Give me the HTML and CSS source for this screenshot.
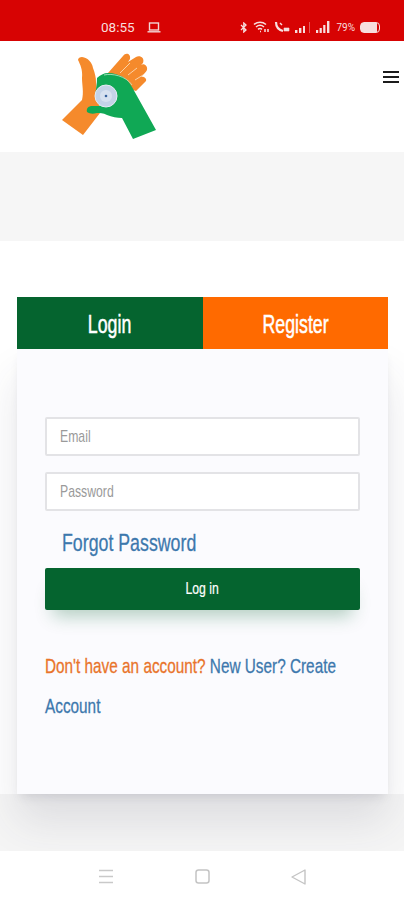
FILE: index.html
```html
<!DOCTYPE html>
<html lang="en">
<head>
    <meta charset="UTF-8">
    <meta name="viewport" content="width=device-width, initial-scale=1.0">
    <title>Login</title>
    <link rel="stylesheet" href="styles.css">
</head>
<body>
    <div class="statusbar">
        <span class="time">08:55</span>
        <svg class="laptop" width="14" height="11" viewBox="0 0 14 11" fill="none" stroke="#f3d6d6" stroke-width="1.4">
            <rect x="2.5" y="1" width="9" height="7"/>
            <path d="M0.5 9.8h13"/>
        </svg>
        <div class="status-right">
            <svg width="8" height="11" viewBox="0 0 8 11" fill="none" stroke="#f7dede" stroke-width="1.3"><path d="M1 3l5 5-2.2 2V1L6 3 1 8"/></svg>
            <svg width="16" height="12" viewBox="0 0 16 12" fill="none" stroke="#f7dede" stroke-width="1.5"><path d="M1 3.5c3.5-3 8.5-3 12 0M3 6c2.4-2 5.6-2 8 0M5 8.4c1.2-1 2.8-1 4 0"/><path d="M7 10.5h1M12 8v3M15 8v3"/></svg>
            <svg width="16" height="12" viewBox="0 0 16 12" fill="none" stroke="#f7dede" stroke-width="2.2"><path d="M2 1c0 5 3 8 7 9"/><path d="M10 7h5v3h-5z" fill="#f7dede" stroke-width="0.6"/><path d="M6 2l2 2" stroke-width="1.4"/></svg>
            <svg width="16" height="11" viewBox="0 0 16 11" fill="#f7dede"><rect x="0" y="8" width="2.4" height="3"/><rect x="4" y="6" width="2.4" height="5"/><rect x="8" y="4" width="2" height="7"/><rect x="14" y="0" width="0.8" height="11" opacity=".5"/></svg>
            <svg width="15" height="12" viewBox="0 0 15 12" fill="#f7dede"><rect x="0" y="9" width="2.2" height="3"/><rect x="3.6" y="7" width="2.2" height="5"/><rect x="7.2" y="4" width="2.2" height="8"/><rect x="11" y="0" width="2.4" height="12"/></svg>
            <span class="battery-text">79%</span>
            <span class="battery"></span>
        </div>
    </div>

    <header class="topbar">
        <svg class="logo" width="100" height="90" viewBox="60 50 100 90">
            <path fill="#f58a2c" d="M82 57C88 58 92 62 93 68C95 73 96 78 96 82L100 113L83 135L62 120L82 100C84 92 82 85 82 78C83 70 80 64 78 60C78 58 80 57 82 57Z"/>
            <path fill="#f58a2c" d="M108 73L123 56C126 52 131 54 130 59L128 62L136 57C140 55 145 58 143 63L141 65C144 63 148 66 147 70C146 72 143 75 141 77C144 76 147 79 146 81L136 91L118 85Z"/>
            <path fill="none" stroke="#fbd9b4" stroke-width="0.9" d="M120 73L130 63M128 75L137 68M135 80L143 75"/>
            <path fill="#10a855" d="M97 78C100 75 104 73 108 73C114 73 119 75 123 77C128 80 130 84 132 87L156 130L133 139L122 118C117 118 112 117 107 115C103 113 100 113 97 113C93 114 90 114 87 112C86 108 89 106 92 106L100 106C97 102 95 99 95 95C96 90 97 84 97 78Z"/>
            <path fill="none" stroke="#bfe9cd" stroke-width="0.8" d="M104 75C112 73 126 76 132 85"/>
            <circle cx="106" cy="96" r="11" fill="#c4d3e8" stroke="#e6ecf5" stroke-width="1"/>
            <circle cx="106" cy="96" r="6" fill="#d7e1f0"/>
            <circle cx="106" cy="96" r="1.3" fill="#35609c"/>
        </svg>
        <div class="burger"><span></span><span></span><span></span></div>
    </header>

    <div class="band"></div>

    <main class="content">
        <div class="tabs">
            <a class="tab tab-login"><span class="tab-label">Login</span></a>
            <a class="tab tab-register"><span class="tab-label">Register</span></a>
        </div>
        <form class="card">
            <div class="field"><span class="hint">Email</span></div>
            <div class="field"><span class="hint">Password</span></div>
            <a class="forgot">Forgot Password</a>
            <button class="btn" type="button"><span class="btn-label">Log in</span></button>
            <p class="signup"><span class="signup-q">Don't have an account?</span> <a><span>New User? Create</span> <span>Account</span></a></p>
        </form>
    </main>

    <div class="bottom-band"></div>

    <nav class="navbar">
        <svg width="16" height="15" viewBox="0 0 16 15" stroke="#c9c9c9" stroke-width="1.5"><path d="M1 1.5h14M1 7.5h14M1 13.5h14"/></svg>
        <svg width="15" height="15" viewBox="0 0 15 15" fill="none" stroke="#c4c4c4" stroke-width="1.5"><rect x="1" y="1" width="13" height="13" rx="2.5"/></svg>
        <svg width="15" height="16" viewBox="0 0 15 16" fill="none" stroke="#c4c4c4" stroke-width="1.4" stroke-linejoin="round"><path d="M14 1v14L1 8z"/></svg>
    </nav>
</body>
</html>
```

FILE: styles.css
```css
* {
    box-sizing: border-box;
}

html, body {
    margin: 0;
    padding: 0;
}

/* no condensed font is installed, so text is narrowed with scaleX below */
body {
    width: 404px;
    height: 900px;
    overflow: hidden;
    background-color: #fff;
    font-family: "Liberation Sans", sans-serif;
}

.statusbar {
    height: 41px;
    background-color: #d70303;
    display: flex;
    align-items: center;
    padding: 13px 24px 0 101px;
    color: #f7dede;
}

.time {
    font-family: Roboto, sans-serif;
    font-size: 13.5px;
    width: 35px;
}

.laptop {
    margin-left: 11px;
}

.status-right {
    margin-left: auto;
    display: flex;
    align-items: center;
    gap: 5px;
}

.battery-text {
    font-family: Roboto, sans-serif;
    font-size: 10px;
}

.battery {
    width: 20px;
    height: 11px;
    border: 1.5px solid #f7dede;
    border-radius: 4px;
    background: linear-gradient(to right, #f7dede 88%, #d70303 88%);
}

.topbar {
    height: 111px;
    background-color: #fff;
    display: flex;
    align-items: flex-start;
    justify-content: space-between;
    padding: 9px 5px 0 60px;
}

.burger {
    width: 16px;
    margin-top: 21px;
    display: flex;
    flex-direction: column;
    gap: 3px;
}

.burger span {
    height: 2px;
    background-color: #1c1c1c;
}

.band {
    height: 89px;
    background-color: #f6f6f6;
}

.content {
    height: 553px;
    padding: 56px 16px 0 17px;
    background-color: #fff;
    position: relative;
    z-index: 1;
}

.tabs {
    display: flex;
    height: 52px;
}

.tab {
    flex: 1;
    display: flex;
    align-items: center;
    justify-content: center;
    color: #fff;
    font-size: 25px;
    padding-top: 3px;
    -webkit-text-stroke: 0.5px #fff;
}

.tab-label {
    display: inline-block;
    transform: scaleX(0.71);
}

.tab-login {
    background-color: #05642f;
}

.tab-register {
    background-color: #ff6a00;
}

.card {
    height: 445px;
    padding: 68px 28px 0;
    background-color: #fbfbfe;
    box-shadow: 0 6px 10px -4px rgba(60, 60, 80, 0.14), 0 28px 40px rgba(60, 60, 80, 0.12);
    display: flex;
    flex-direction: column;
    align-items: flex-start;
}

.field {
    width: 315px;
    height: 39px;
    margin-bottom: 16px;
    padding: 0 13px;
    background-color: #fff;
    border: 2px solid #e3e3e6;
    border-radius: 2px;
    font-size: 17px;
    line-height: 35px;
    color: #9a9a9a;
}

.hint {
    display: inline-block;
    transform: scaleX(0.72);
    transform-origin: left center;
}

.forgot {
    margin: -1px 0 0 17px;
    height: 33px;
    line-height: 33px;
    font-size: 24.5px;
    color: #3d78ad;
    -webkit-text-stroke: 0.3px #3d78ad;
    transform: scaleX(0.725);
    transform-origin: left center;
}

.btn {
    width: 315px;
    height: 42px;
    margin-top: 9px;
    border: none;
    border-radius: 2px;
    background-color: #05642f;
    color: #fff;
    font-family: inherit;
    font-size: 17px;
    -webkit-text-stroke: 0.2px #fff;
    box-shadow: 0 14px 18px -8px rgba(5, 100, 47, 0.3);
}

.btn-label {
    display: inline-block;
    transform: scaleX(0.72);
}

.signup {
    width: 431px;
    flex-shrink: 0;
    margin: 36px 0 0;
    font-size: 21px;
    line-height: 40px;
    color: #3d78ad;
    -webkit-text-stroke: 0.3px #3d78ad;
    transform: scaleX(0.73);
    transform-origin: left center;
}

.signup-q {
    color: #e9742b;
    -webkit-text-stroke: 0.3px #e9742b;
}

.bottom-band {
    height: 57px;
    background-color: #f5f5f5;
}

.navbar {
    height: 49px;
    background-color: #fff;
    position: relative;
    z-index: 2;
    display: flex;
    align-items: flex-start;
    justify-content: space-between;
    padding: 18px 98px 0 98px;
}
```
